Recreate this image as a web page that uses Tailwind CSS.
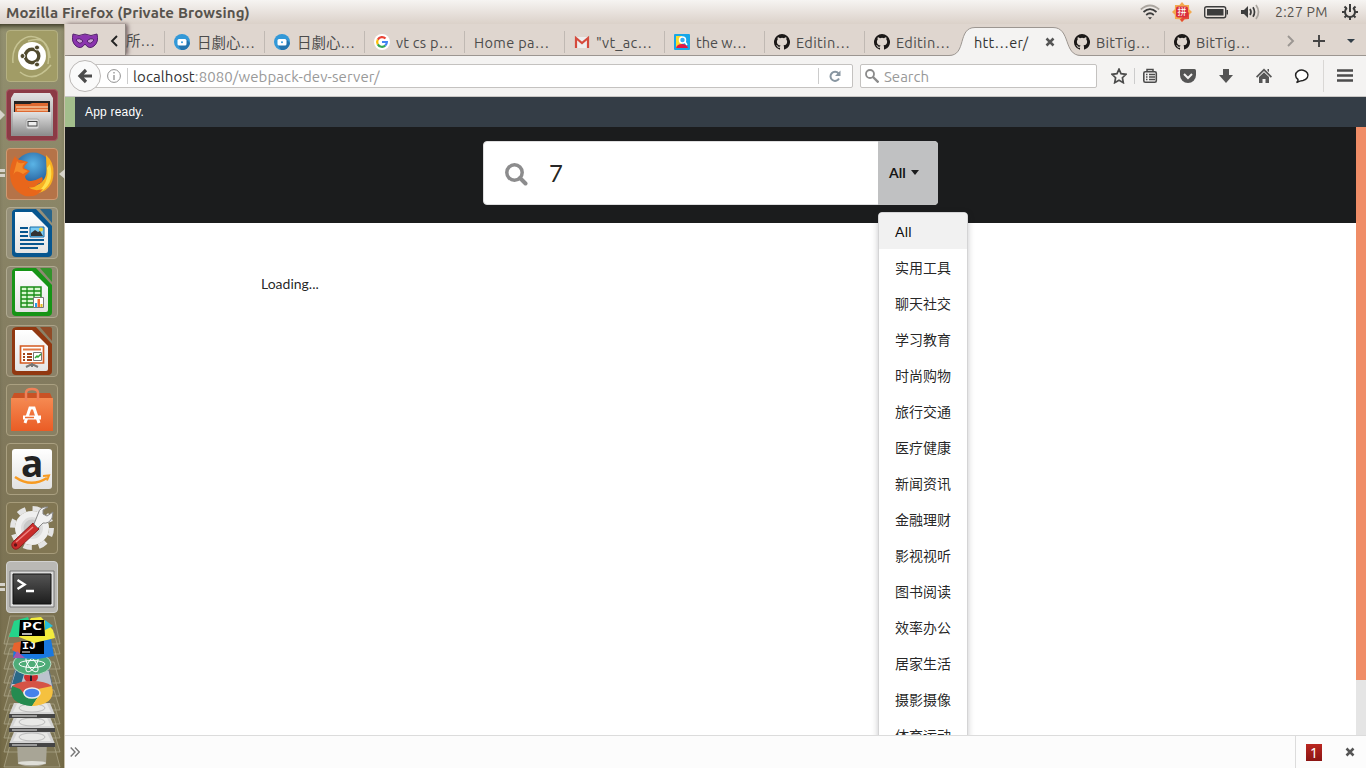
<!DOCTYPE html>
<html lang="en">
<head>
<meta charset="utf-8">
<title>Mozilla Firefox (Private Browsing)</title>
<script src="https://cdn.jsdelivr.net/npm/@tailwindcss/browser@4"></script>
</head>
<body class="w-[1366px] h-[768px] overflow-hidden flex flex-col bg-white font-['Ubuntu','Noto_Sans','Noto_Sans_CJK_SC',sans-serif] text-[#4c4c4c]">
<svg class="absolute w-0 h-0">
  <defs>
    <linearGradient id="gry" x1="0" y1="0" x2="0" y2="1"><stop offset="0" stop-color="#e2e2e2"/><stop offset="1" stop-color="#8e8e8e"/></linearGradient>
    <linearGradient id="paper" x1="0" y1="0" x2="0" y2="1"><stop offset="0" stop-color="#fff"/><stop offset="1" stop-color="#e4e4e4"/></linearGradient>
    <linearGradient id="drk" x1="0" y1="0" x2="0" y2="1"><stop offset="0" stop-color="#555"/><stop offset="1" stop-color="#1d1d1d"/></linearGradient>
    <linearGradient id="org" x1="0" y1="0" x2="0" y2="1"><stop offset="0" stop-color="#f58a52"/><stop offset="1" stop-color="#ea5c25"/></linearGradient>
    <radialGradient id="blu" cx=".5" cy=".3" r=".7"><stop offset="0" stop-color="#5ab4e6"/><stop offset="1" stop-color="#123f80"/></radialGradient>
  </defs>
  <symbol id="gh" viewBox="0 0 16 16"><path fill="#1b1817" fill-rule="evenodd" d="M8 0a8 8 0 0 0-2.53 15.59c.4.07.55-.17.55-.38v-1.49c-2.23.48-2.7-.95-2.7-.95-.36-.92-.89-1.17-.89-1.17-.73-.5.05-.49.05-.49.81.06 1.23.83 1.23.83.72 1.23 1.88.88 2.34.67.07-.52.28-.88.51-1.08-1.78-.2-3.65-.89-3.65-3.95 0-.87.31-1.59.82-2.15-.08-.2-.36-1.02.08-2.12 0 0 .67-.21 2.2.82a7.6 7.6 0 0 1 4 0c1.53-1.04 2.2-.82 2.2-.82.44 1.1.16 1.92.08 2.12.51.56.82 1.27.82 2.15 0 3.07-1.87 3.75-3.65 3.95.29.25.54.73.54 1.48v2.2c0 .21.15.46.55.38A8 8 0 0 0 8 0Z"/></symbol>
  <symbol id="vid" viewBox="0 0 16 16"><circle cx="8" cy="8" r="8" fill="#3399d8"/><path d="M12 5l4 4a8 8 0 0 1-9 7l-3-5z" fill="#2374ae"/><rect x="3.5" y="5" width="9" height="6.5" rx="1.5" fill="#fff"/><circle cx="8" cy="8.2" r="1" fill="#3399d8"/></symbol>
  <symbol id="doc" viewBox="0 0 52 52"><path d="M12 2h18l16 17v27q0 4-4 4H10q-4 0-4-4V6q0-4 6-4Z" fill="currentColor"/><path d="M9 5h17l16 16v23q0 2-2 2H11q-2 0-2-2Z" fill="url(#paper)"/><path d="M34 2h10q2 0 2 2v12Z" fill="currentColor" opacity=".75"/></symbol>
  <symbol id="drive" viewBox="0 0 46 18"><path d="M5 0H41L46 12H0Z" fill="#d4d4d4"/><path d="M8 1H38L42 9H4Z" fill="#e8e8e6"/><ellipse cx="23" cy="5" rx="13" ry="4" fill="none" stroke="#bbb"/><path d="M0 11H46V15H0Z" fill="#454545"/><path d="M3 13H28" stroke="#eee"/></symbol>
</svg>

<!-- System panel -->
<header class="h-6 shrink-0 flex items-center justify-between pl-1.5 pr-2 bg-gradient-to-b from-[#f6f4f2] to-[#dbd1c9]">
  <h1 class="text-[15px] font-bold tracking-[0.16px] text-[#57534d] leading-none whitespace-nowrap">Mozilla Firefox (Private Browsing)</h1>
  <div class="flex items-center">
    <svg class="w-5 h-5" viewBox="0 0 20 20" fill="none" stroke-width="1.700"><path d="M.8 7.500Q10-.5 19.200 7.500" stroke="#aaa59f"/><path d="M3.500 10Q10 4.200 16.500 10M6.200 13Q10 9.500 13.800 13" stroke="#3c3c3c"/><path d="M8 15.200h4L10 17.500Z" fill="#3c3c3c"/></svg>
    <div class="ml-3 relative w-5 h-5 flex items-center justify-center">
      <svg class="absolute inset-0" viewBox="0 0 20 20"><path fill="#f3a94e" d="M10 0l2.600 3L17 3l.2 4.300L20 10l-2.800 2.700L17 17l-4.400.2L10 20l-2.600-2.800L3 17l-.2-4.300L0 10l2.800-2.700L3 3l4.400 0Z"/><path d="M17 10v7l-4.400.2L10 20l-2-2.500Z" fill="#e44a36"/><rect x="4" y="4.500" width="12" height="11" rx="2" fill="#d92f3c"/></svg>
      <span class="relative text-[9px] leading-none text-white">拼</span>
    </div>
    <svg class="ml-3 w-6 h-5" viewBox="0 0 24 20"><rect x=".7" y="4.700" width="21" height="11" rx="2" fill="none" stroke="#3c3c3c" stroke-width="1.400"/><rect x="3" y="7" width="16.500" height="6.500" fill="#3c3c3c"/><path d="M22.500 8h1.500v4.500h-1.500z" fill="#3c3c3c"/></svg>
    <svg class="ml-3 w-5 h-5" viewBox="0 0 20 20" fill="none" stroke-width="1.700"><path d="M1 8h3l4-4v12l-4-4H1Z" fill="#3c3c3c"/><path d="M10 7q2 3 0 6M13 5.200q3 4.800 0 9.600" stroke="#3c3c3c"/><path d="M16 3q5 7 0 14" stroke="#aaa59f"/></svg>
    <span class="ml-[15px] text-[14px] tracking-[0.24px] leading-none text-[#57534d] w-[55px] whitespace-nowrap">2:27 PM</span>
    <svg class="ml-3 w-4 h-5" viewBox="0 0 16 20" fill="none" stroke="#3c3c3c"><path d="M5 6a5 5 0 1 0 6 0" stroke-width="2"/><path d="M8 2v8" stroke-width="2"/><path d="M2.500 4.500l2 2M13.500 4.500l-2 2M0 10h3M13 10h3M2.500 15.500l2-2M13.500 15.500l-2-2M8 15v3" stroke-width="2"/></svg>
  </div>
</header>

<div class="flex flex-1 min-h-0">
  <!-- Launcher -->
  <aside class="w-[65px] shrink-0 pt-1.5 flex flex-col items-start pl-1.5 gap-[7px] border-r border-[#c9bfa9] bg-gradient-to-b from-[#92906f] via-[#827a5e] to-[#756b47] shadow-[inset_0_5px_5px_-3px_#34321f]">
    <div class="size-[52px] shrink-0 rounded-[4px] border border-[#b5b183] bg-[#a19c66]">
      <svg viewBox="1 1 50 50"><path d="M7 33C5 14 20 1 34 9q11 7 8 25M14 42q15 12 31-7M22 11Q42 4 44 28" fill="none" stroke="#d0cd9d" stroke-width="1.500" opacity=".8"/><circle cx="26" cy="26" r="14" fill="#fff"/><circle cx="26" cy="26" r="6.800" fill="none" stroke="#514a2e" stroke-width="3.400"/><g fill="#514a2e" stroke="#fff" stroke-width="1"><circle cx="16.500" cy="26" r="2.500"/><circle cx="31" cy="17.500" r="2.500"/><circle cx="31" cy="34.500" r="2.500"/></g></svg>
    </div>
    <div class="relative size-[52px] shrink-0 rounded-[4px] border border-[#a75963] bg-[#8b3b45]">
      <svg viewBox="1 1 50 50"><path d="M8 4h36l3 5v38H5V9Z" fill="url(#gry)"/><path d="M8 12h36v12H8z" fill="#242424"/><path d="M9 15h15l2-1h16v9H9z" fill="#df6930"/><path d="M10 18h32M11 21h31" stroke="#fff0cd"/><path d="M7 23h38v23H7z" fill="url(#gry)"/><rect x="20" y="30" width="13" height="10" rx="2" fill="#ddd" stroke="#aaa"/><rect x="22" y="32.500" width="9" height="4.500" fill="#eee" stroke="#444"/></svg>
      <span class="absolute left-[-7px] top-5 w-0 h-0 border-y-[5px] border-y-transparent border-l-[5px] border-l-[#d6d3ca]"></span>
    </div>
    <div class="relative size-[52px] shrink-0 rounded-[4px] border border-[#cf9a73] bg-[#b57348]">
      <svg viewBox="1 1 50 50"><circle cx="27" cy="24" r="19.500" fill="url(#blu)"/><path d="M40 7q8 7 7.500 18q0 18-19 21l-6-7q18-2 18-17Z" fill="#f8b021"/><path d="M44 16q6 22-14 30Q44 34 41 20Z" fill="#ffe04e"/><path d="M9 8q2 4 6 4l7 2q-4 4-4 6l6 3-5 5q0 5 6 5 6-1 11-4 3 5-4 7-4 5-10 3 6 5 15 2-6 9-18 7Q4 42 4 25q0-9 5-17Z" fill="#e8661b"/><path d="M11 13q2 4 9 1-5 4-3 7l5 2-5 3q-8-6-10 2Z" fill="#f58b2a"/></svg>
      <span class="absolute left-[-7px] top-[20px] w-[5px] h-2 border-y-[3px] border-[#d6d3ca]"></span>
      <span class="absolute right-[-8px] top-[20px] w-0 h-0 border-y-[5px] border-y-transparent border-r-[6px] border-r-[#d6d3ca]"></span>
    </div>
    <div class="size-[52px] shrink-0 rounded-[4px] border border-[#b0aa91] bg-[#95907a] text-[#07568f]">
      <svg viewBox="1 1 50 50"><use href="#doc" width="52" height="52"/><path d="M14 21h8M14 25h8M14 29h8M14 33h24M14 37h24M14 41h18" stroke="#07568f" stroke-width="2"/><path d="M24 20h14v10H24z" fill="#7dcdf5" stroke="#176ca7"/><circle cx="35" cy="22.500" r="2" fill="#f2d336"/><path d="M25 29v-3l4-3 3 2 2-1 3 5Z" fill="#333"/></svg>
    </div>
    <div class="size-[52px] shrink-0 rounded-[4px] border border-[#b0aa91] bg-[#8f8a72] text-[#169416]">
      <svg viewBox="1 1 50 50"><use href="#doc" width="52" height="52"/><path d="M15 21h20v20H15z" fill="#d8f7cf" stroke="#188c16" stroke-width="1.500"/><path d="M15 25h20M15 29h20M15 33h20M15 37h20M21 21v20M28 21v20" stroke="#188c16" stroke-width="1.300"/><path d="M27.500 31.500h10v10h-10z" fill="#fff" stroke="#777"/><path d="M29 37h2v4h-2z" fill="#239eea"/><path d="M31.500 33h2.500v8h-2.500z" fill="#f26b2c"/><path d="M34.500 38h2v3h-2z" fill="#e5bc1d"/></svg>
    </div>
    <div class="size-[52px] shrink-0 rounded-[4px] border border-[#aca287] bg-[#8b8268] text-[#913811]">
      <svg viewBox="1 1 50 50"><use href="#doc" width="52" height="52"/><path d="M14.500 21h23v17h-23z" fill="#fff" stroke="#d45a20" stroke-width="1.700"/><path d="M17 24.500h18" stroke="#e17845" stroke-width="2"/><path d="M17 29h2M17 32h2M17 35h2M21 29h5M21 32h5M21 35h5" stroke="#a3461c" stroke-width="2"/><path d="M27.500 27.500h8v8h-8z" fill="#fff" stroke="#777"/><path d="M29 33l2-2 1 1 3-3" stroke="#30a534" stroke-width="1.500" fill="none"/><path d="M20 42l6-3 6 3M26 38v4" stroke="#777" stroke-width="2" fill="none"/></svg>
    </div>
    <div class="size-[52px] shrink-0 rounded-[4px] border border-[#aaa081] bg-[#898063]">
      <svg viewBox="1 1 50 50"><path d="M8 9h36l3 7H5Z" fill="#c95225"/><path d="M5 14h42v33H5z" fill="url(#org)"/><path d="M20 17V9q0-4 6-4t6 4v8" fill="none" stroke="#ef8159" stroke-width="2.500"/><path d="M19 39l5-15h4l5 15" fill="none" stroke="#fff" stroke-width="3"/><path d="M17 33.500h18" stroke="#fff" stroke-width="4"/><path d="M19 33.500h9" stroke="#ee6d33" stroke-width="1.500"/></svg>
    </div>
    <div class="size-[52px] shrink-0 rounded-[4px] border border-[#aaa081] bg-[#847a5a] flex items-center justify-center">
      <div class="relative size-10 rounded-[3px] bg-gradient-to-b from-white to-[#e2e2e2]">
        <span class="absolute left-[9px] top-[-5px] font-['Open_Sans'] font-bold text-[37px] leading-[38px] text-[#222]">a</span>
        <svg class="absolute inset-0" viewBox="0 0 40 40"><path d="M3 28q16 11 32 1" fill="none" stroke="#f79b22" stroke-width="2.500"/><path d="M31 27l6-.5-2 5" fill="none" stroke="#f79b22" stroke-width="2"/></svg>
      </div>
    </div>
    <div class="size-[52px] shrink-0 rounded-[4px] border border-[#a69b7a] bg-[#817653]">
      <svg viewBox="1 1 50 50"><circle cx="26" cy="26" r="19.500" fill="none" stroke="#e4e4e4" stroke-width="5" stroke-dasharray="8.300 7.010"/><circle cx="26" cy="26" r="14" fill="#ddd" stroke="#efefef" stroke-width="6"/><circle cx="26" cy="26" r="8.500" fill="#c8c8c8"/><path d="M7 46q-3-4 1-7l19-18 6 6-19 18q-4 4-7 1Z" fill="#c92d2b" stroke="#8f1d20"/><path d="M10 40l17-15" stroke="#ee8380" stroke-width="1.500"/><path d="M28 22l4 4 5-5q6 1 9-5l1-6-6 4-4-2v-4l5-3q-8-1-10 7Z" fill="#f1f1f1" stroke="#888"/><circle cx="9.500" cy="43" r="1.700" fill="#621517"/></svg>
    </div>
    <div class="relative size-[52px] shrink-0 rounded-[4px] border border-[#d2d2d0] bg-[#bab9b5]">
      <svg viewBox="1 1 50 50"><path d="M4 10h44v36H4z" fill="#ddd" stroke="#777"/><path d="M7 13h38v30H7z" fill="url(#drk)" stroke="#111"/><path d="M11.500 19l7 4.500-7 4.500M20 30h8" fill="none" stroke="#fff" stroke-width="2.500"/></svg>
      <span class="absolute left-[-7px] top-[21px] w-[5px] h-2 border-y-[3px] border-[#d6d3ca]"></span>
    </div>
    <svg class="w-[58px] h-[153px] -mt-[5px] -ml-[3px] shrink-0" viewBox="3 615 58 153">
      <g fill="#8b876a" fill-opacity=".35" stroke="#b3ad91" stroke-opacity=".65"><path d="M10 616h44l6 28H4zM10 633h44l6 21H4zM10 648h44l6 21H4zM10 662h44l6 21H4zM10 676h44l6 20H4zM10 690h44l6 20H4zM10 704h44l6 20H4zM10 718h44l6 20H4zM10 732h44l6 20H4zM10 745h44l6 22H4z"/></g>
      <path d="M17 742h30l-1 22q-14 5-28 0Z" fill="#a8a596"/><ellipse cx="32" cy="763" rx="14" ry="2" fill="#dfdfd8"/>
      <use href="#drive" x="9" y="732" width="46" height="18"/><use href="#drive" x="9" y="717" width="46" height="18"/><use href="#drive" x="9" y="703" width="46" height="18"/>
      <ellipse cx="32" cy="693" rx="20" ry="12" fill="#eee"/><path d="M13 687q7-8 19-8t20 9H32l-5 9Z" fill="#d55346"/><path d="M12 687q-4 17 20 19l7-11q-13 6-18-5Z" fill="#258b50"/><path d="M37 688h15q4 16-20 18l8-12Z" fill="#f5c13f"/><ellipse cx="32" cy="693" rx="8" ry="5" fill="#4682ec" stroke="#eee" stroke-width="1.500"/>
      <path d="M15 670h34l4 18H10Z" fill="#bcc3ce" stroke="#5d717f"/><path d="M16 671h9l-4 13H12Z" fill="#2a6887"/><ellipse cx="31" cy="677" rx="7" ry="6" fill="#cc2d2f"/><path d="M31 671v10" stroke="#221d29" stroke-width="2"/>
      <path d="M12 686q7-5 20-5t20 5v3H12Z" fill="#d55346"/><path d="M12 686q-4 18 20 20l7-11q-13 5-19-6Z" fill="#258b50"/><path d="M38 689l14-3q4 18-20 20l8-12Z" fill="#f5c13f"/><ellipse cx="32" cy="693" rx="8" ry="5" fill="#4682ec" stroke="#eee" stroke-width="1.500"/>
      <ellipse cx="32" cy="664" rx="19" ry="11" fill="#4fac78" stroke="#b8dac5"/><g fill="none" stroke="#fff"><ellipse cx="32" cy="664" rx="13" ry="3.500"/><ellipse cx="32" cy="664" rx="4" ry="9" transform="rotate(35 32 664)"/><ellipse cx="32" cy="664" rx="4" ry="9" transform="rotate(-35 32 664)"/></g>
      <path d="M14 646l37-7 3 17-16 3-25-1Z" fill="#1978e0"/><path d="M14 643l9-2-2 14-9-5Z" fill="#e8632d"/><path d="M17 651l8 7H13Z" fill="#a255aa"/><path d="M21 641h23v13H20z" fill="#000"/>
      <text x="22" y="649" textLength="14" lengthAdjust="spacingAndGlyphs" font-family="Liberation Mono" font-size="10" font-weight="700" fill="#fff">IJ</text><path d="M22 652h8" stroke="#eee"/>
      <path d="M14 621l14-4 7 20-26 0Z" fill="#24d48a"/><path d="M31 618l10-1 12 13 2 8-21 5-15-6Z" fill="#f3ec3d"/><path d="M45 620l8 6-8 4Z" fill="#25bddb"/><path d="M20 620h24l1 16H19z" fill="#000"/>
      <text x="22" y="630" textLength="20" lengthAdjust="spacingAndGlyphs" font-family="Open Sans" font-size="11" font-weight="700" fill="#fff">PC</text><path d="M22 634h10" stroke="#eee" stroke-width="1.500"/>
    </svg>
  </aside>

  <main class="flex-1 min-w-0 flex flex-col">
    <!-- Tab strip -->
    <nav class="h-8 shrink-0 relative flex bg-[#dfd6cf] border-b border-[#9c9691] text-[14.500px] leading-none [&_span]:pt-[3px]">
      <div class="w-[61px] shrink-0 flex items-center pt-[3px] pl-[7px] border-r border-[#8d8781] shadow-[2px_0_4px_#766]">
        <svg class="w-[26px] h-4" viewBox="0 0 26 16"><path d="M1 1q6 3 12 0 6 3 12 0 2 8-3 12-5 4-9-2-4 6-9 2Q-1 9 1 1Z" fill="#8b35ae" stroke="#54216d"/><path d="M4 7q3-3 7 1-3 5-7-1ZM22 7q-3-3-7 1 3 5 7-1Z" fill="#c9a0d4" stroke="#54216d"/></svg>
        <svg class="ml-[11px] w-3 h-3" viewBox="0 0 12 12"><path d="M8 1L3 6l5 5" fill="none" stroke="#222" stroke-width="1.900"/></svg>
      </div>
      <div class="w-[38px] shrink-0 flex items-center pt-1 overflow-hidden whitespace-nowrap">所…</div>
      <div class="w-[100px] shrink-0 mt-[7px] mb-0.5 border-l border-[#c0b9b3] pl-[9px] flex items-center gap-[7px] whitespace-nowrap"><svg class="size-4"><use href="#vid"/></svg><span>日劇心…</span></div>
      <div class="w-[100px] shrink-0 mt-[7px] mb-0.5 border-l border-[#c0b9b3] pl-[9px] flex items-center gap-[7px] whitespace-nowrap"><svg class="size-4"><use href="#vid"/></svg><span>日劇心…</span></div>
      <div class="w-[100px] shrink-0 mt-[7px] mb-0.5 border-l border-[#c0b9b3] pl-[9px] flex items-center gap-1.5 whitespace-nowrap"><svg class="size-4" viewBox="0 0 16 16"><circle cx="8" cy="8" r="8" fill="#fff"/><g fill="none" stroke-width="2.200"><path d="M11.500 4.500A4.900 4.900 0 0 0 3.800 5.600" stroke="#ea4335"/><path d="M3.800 5.600a5 5 0 0 0 0 4.800" stroke="#fbbc05"/><path d="M3.800 10.400a4.900 4.900 0 0 0 7.400 1.200" stroke="#34a853"/><path d="M11.200 11.600A4.900 4.900 0 0 0 12.900 8H8" stroke="#4285f4"/></g></svg><span class="tracking-[0.250px]">vt cs p…</span></div>
      <div class="w-[100px] shrink-0 mt-[7px] mb-0.5 border-l border-[#c0b9b3] pl-[9px] flex items-center whitespace-nowrap"><span class="tracking-[0.350px]">Home pa…</span></div>
      <div class="w-[100px] shrink-0 mt-[7px] mb-0.5 border-l border-[#c0b9b3] pl-[9px] flex items-center gap-1.5 whitespace-nowrap"><svg class="size-4" viewBox="0 0 16 16"><path d="M1 3h14v11H1z" fill="#eee"/><path d="M2 14V4l6 5 6-5v10" fill="none" stroke="#d54b3d" stroke-width="2.200"/></svg><span class="tracking-[0.250px]">"vt_ac…</span></div>
      <div class="w-[100px] shrink-0 mt-[7px] mb-0.5 border-l border-[#c0b9b3] pl-[9px] flex items-center gap-1.5 whitespace-nowrap"><svg class="size-4" viewBox="0 0 16 16"><rect width="16" height="16" rx="1" fill="#17a7e8"/><path d="M2 2h6v12H2z" fill="#f7dc2f"/><path d="M2 14q1-4 6-4t6 4Z" fill="#e51843"/><circle cx="8.500" cy="6" r="3" fill="#36aef0" stroke="#fff" stroke-width="1.500"/><path d="M11 8l2 3" stroke="#fff" stroke-width="1.500"/></svg><span>the w…</span></div>
      <div class="w-[100px] shrink-0 mt-[7px] mb-0.5 border-l border-[#c0b9b3] pl-[9px] flex items-center gap-1.5 whitespace-nowrap"><svg class="size-4"><use href="#gh"/></svg><span class="tracking-[0.350px]">Editin…</span></div>
      <div class="w-[100px] shrink-0 mt-[7px] mb-0.5 border-l border-[#c0b9b3] pl-[9px] flex items-center gap-1.5 whitespace-nowrap"><svg class="size-4"><use href="#gh"/></svg><span class="tracking-[0.350px]">Editin…</span></div>
      <div class="w-[100px] shrink-0 relative flex items-center justify-between pt-[5px] pl-[10px] pr-[9px] text-[#333]">
        <svg class="absolute left-[-15px] top-[3px] w-[132px] h-[29px]" viewBox="0 0 132 29"><path d="M0 28.500C18 28.500 8 .5 26 .5H104C122 .5 114 28.500 132 28.500V29H0Z" fill="#f4f3f2"/><path d="M0 28.500C18 28.500 8 .5 26 .5H104C122 .5 114 28.500 132 28.500" fill="none" stroke="#9c9691"/></svg>
        <span class="relative whitespace-nowrap tracking-[0.250px]">htt…er/</span>
        <svg class="relative size-[10px]" viewBox="0 0 10 10"><path d="M1.500 1.500l7 7M8.500 1.500l-7 7" stroke="#555" stroke-width="2.500"/></svg>
      </div>
      <div class="w-[100px] shrink-0 mt-[7px] mb-0.5 pl-[10px] flex items-center gap-1.5 whitespace-nowrap"><svg class="size-4 relative"><use href="#gh"/></svg><span class="tracking-[0.200px]">BitTig…</span></div>
      <div class="w-[100px] shrink-0 mt-[7px] mb-0.5 border-l border-[#c0b9b3] pl-[9px] flex items-center gap-1.5 whitespace-nowrap"><svg class="size-4"><use href="#gh"/></svg><span class="tracking-[0.200px]">BitTig…</span></div>
      <div class="flex items-center pt-[3px]">
        <svg class="ml-[21px] w-3 h-3" viewBox="0 0 12 12"><path d="M3 1l5 5-5 5" fill="none" stroke="#9b9692" stroke-width="1.900"/></svg>
        <svg class="ml-4 w-3 h-3" viewBox="0 0 12 12"><path d="M0 6h12M6 0v12" stroke="#444" stroke-width="1.900"/></svg>
        <svg class="ml-[22px] w-2 h-1" viewBox="0 0 8 4"><path d="M0 0h8L4 4Z" fill="#333f48"/></svg>
      </div>
    </nav>

    <!-- Navigation toolbar -->
    <div class="h-[41px] shrink-0 relative flex items-center bg-[#f4f3f2] border-b border-[#c9c7c5] text-[15px]">
      <div class="absolute left-1 top-1 size-8 rounded-full bg-[#fafafa] border border-[#bbb8b6] flex items-center justify-center">
        <svg class="size-4" viewBox="0 0 16 16"><path d="M15 8H4M9 2L3 8l6 6" fill="none" stroke="#4c4c4c" stroke-width="3.200"/></svg>
      </div>
      <div class="ml-[30px] w-[758px] h-6 border border-[#c4c2c0] rounded-r-[2px] bg-white flex items-center">
        <svg class="ml-[11px] size-[14px] shrink-0" viewBox="0 0 14 14"><circle cx="7" cy="7" r="6.400" fill="none" stroke="#909090"/><path d="M7 6v5M7 3v1.500" stroke="#909090" stroke-width="1.300"/></svg>
        <span class="ml-1.5 w-px h-4 bg-[#ccc]"></span>
        <span class="ml-[5px] flex-1 whitespace-nowrap tracking-[0.090px] text-[#999] leading-none"><span class="text-[#333]">localhost</span>:8080/webpack-dev-server/</span>
        <span class="w-px h-4 bg-[#ccc]"></span>
        <svg class="ml-[10px] mr-[11px] size-3" viewBox="0 0 12 12"><path d="M9.500 3.500A4.500 4.500 0 1 0 10 8.500" fill="none" stroke="#8896a1" stroke-width="2"/><path d="M11.500.5v5.500H6Z" fill="#8896a1"/></svg>
      </div>
      <div class="ml-[7px] w-[237px] h-6 border border-[#c4c2c0] rounded-[2px] bg-white flex items-center text-[#999]">
        <svg class="ml-1 size-[14px]" viewBox="0 0 14 14"><circle cx="5" cy="5" r="4" fill="none" stroke="#8b8b8b" stroke-width="1.800"/><path d="M8 8l5.500 5.500" stroke="#8b8b8b" stroke-width="2.400"/></svg>
        <span class="ml-[5px] leading-none">Search</span>
      </div>
      <svg class="ml-[14px] size-4" viewBox="0 0 16 16"><path d="M8 1.200l2 4.500 5 .6-3.600 3.400.9 5L8 12.300l-4.300 2.400.9-5L1 6.300l5-.6Z" fill="none" stroke="#4c4c4c" stroke-width="1.700"/></svg>
      <span class="ml-[7px] w-px h-4 bg-[#ccc]"></span>
      <svg class="ml-[7px] size-4" viewBox="0 0 16 16"><rect x="1.800" y="3.800" width="12.500" height="10.500" rx="1.500" fill="none" stroke="#4c4c4c" stroke-width="1.600"/><path d="M5 3V1.500h6V3M4 6.500h1.500M7 6.500h6M4 9h1.500M7 9h6M4 11.500h1.500M7 11.500h6" fill="none" stroke="#4c4c4c" stroke-width="1.500"/></svg>
      <svg class="ml-[22px] size-4" viewBox="0 0 16 16"><path d="M1.500 1h13Q16 1 16 2.500V7A8 8 0 0 1 0 7V2.500Q0 1 1.500 1Z" fill="#555"/><path d="M4 6l4 4 4-4" fill="none" stroke="#f4f3f2" stroke-width="2"/></svg>
      <svg class="ml-[22px] size-4" viewBox="0 0 16 16"><path d="M5 1h6v6h4l-7 8-7-8h4Z" fill="#555"/></svg>
      <svg class="ml-[22px] size-4" viewBox="0 0 16 16"><path d="M0 8.500l8-8 8 8-1.200 1.200L8 3 1.200 9.700ZM3 9l5-4.800L13 9v6H9.500v-4h-3v4H3ZM11.500 1H13v3l-1.500-1Z" fill="#555"/></svg>
      <svg class="ml-[22px] size-4" viewBox="0 0 16 16"><path d="M4 11.500A6.200 5.300 0 1 1 9 12.500Q6 12.700 2.500 14.500 4.500 13 4 11.500Z" fill="#fff" stroke="#222" stroke-width="1.500"/></svg>
      <span class="ml-[13px] w-px h-8 bg-[#d9d7d5]"></span>
      <svg class="ml-[13px] w-4 h-4" viewBox="0 0 16 16"><path d="M0 2.500h16M0 7.500h16M0 12.500h16" stroke="#4c4c4c" stroke-width="2.600"/></svg>
    </div>

    <!-- Dev server status -->
    <div class="h-[30px] shrink-0 flex items-center pl-[10px] border-l-[10px] border-[#a3be8c] bg-[#343d46] text-white text-[12px] tracking-[0.200px] font-['Liberation_Sans',sans-serif]">App ready.</div>

    <!-- Page -->
    <div class="flex-1 min-h-0 flex font-['Lato','Noto_Sans_CJK_SC',sans-serif] text-black/87">
      <div class="flex-1 min-w-0 relative">
        <div class="h-24 bg-[#1b1c1d] flex items-start justify-center pt-[14px]">
          <div class="w-[455px] h-16 flex rounded-[4px] bg-white border border-[#dededf]">
            <svg class="ml-[21px] mt-[21px] size-[23px]" viewBox="0 0 23 23"><circle cx="9.500" cy="9.500" r="7.700" fill="none" stroke="#8c8c8d" stroke-width="3.500"/><path d="M15 15l5.500 5.500" stroke="#8c8c8d" stroke-width="4" stroke-linecap="round"/></svg>
            <span class="ml-[21px] flex-1 text-[24px] leading-[62px]">7</span>
            <div class="-my-px -mr-px w-[60px] rounded-r-[4px] bg-[#c0c1c2] pl-[11px] pb-0.5 flex items-center gap-[5px] text-[14px] font-bold text-black/90">All
              <svg class="w-2 h-[5px] mt-px" viewBox="0 0 8 5"><path d="M0 0h8L4 5Z" fill="#1b1c1d"/></svg>
            </div>
          </div>
        </div>
        <p class="pt-[51px] pl-[196px] text-[14px] leading-5">Loading...</p>
        <!-- Category menu -->
        <div class="absolute left-[803px] top-[75px] right-0 bottom-0 pt-[10px] pl-[10px] overflow-hidden">
          <ul class="w-[90px] h-[650px] rounded-[4px] border border-[#d4d4d5] bg-white shadow-[0_2px_6px_rgba(34,36,38,0.25)] text-[14px] leading-[38px] [&>li]:h-9 [&>li]:pl-4 [&>li]:whitespace-nowrap">
            <li class="bg-[#f1f1f1] rounded-t-[3px] text-black/95 tracking-[0.300px]">All</li>
            <li>实用工具</li><li>聊天社交</li><li>学习教育</li><li>时尚购物</li><li>旅行交通</li><li>医疗健康</li><li>新闻资讯</li><li>金融理财</li><li>影视视听</li><li>图书阅读</li><li>效率办公</li><li>居家生活</li><li>摄影摄像</li><li>体育运动</li>
          </ul>
        </div>
      </div>
      <div class="w-[10px] shrink-0 bg-[#e5e5e5]"><div class="h-[553px] bg-[#f08d67]"></div></div>
    </div>

    <!-- Add-on bar -->
    <footer class="h-[33px] shrink-0 flex items-center border-t border-[#dcdcdc] bg-[#fcfcfc]">
      <svg class="ml-[5px] w-[10px] h-[10px]" viewBox="0 0 10 10"><path d="M.7.5L5 5 .7 9.500M5 .5L9.300 5 5 9.500" fill="none" stroke="#777" stroke-width="1.400"/></svg>
      <div class="ml-auto w-[71px] h-full flex items-center border-l border-[#dcdcdc] pl-[10px]">
        <span class="w-4 h-[17px] bg-gradient-to-b from-[#ba2620] to-[#8b1513] text-white text-[14px] leading-[18px] text-center font-['Noto_Sans']">1</span>
        <svg class="ml-[23px] size-[10px]" viewBox="0 0 10 10"><path d="M1.500 1.500l7 7M8.500 1.500l-7 7" stroke="#555" stroke-width="2.500"/></svg>
      </div>
    </footer>
  </main>
</div>
</body>
</html>
